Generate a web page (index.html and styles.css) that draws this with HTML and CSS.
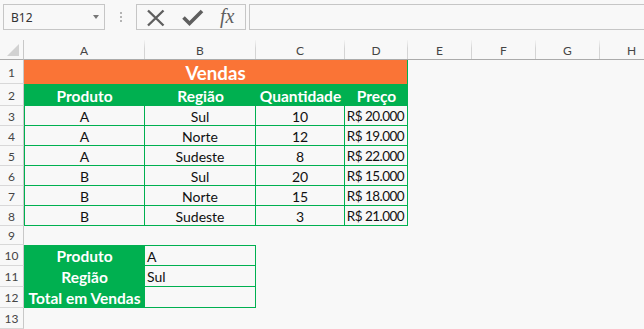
FILE: index.html
```html
<!DOCTYPE html>
<html lang="pt">
<head>
<meta charset="utf-8">
<title>Vendas</title>
<link rel="stylesheet" href="styles.css">
</head>
<body>
<div class="fbar">
  <div class="namebox"><span class="nb-text">B12</span><span class="nb-arrow"></span></div>
  <div class="grip"><i></i><i></i><i></i></div>
  <div class="fbtns">
    <svg class="ico ico-x" width="20" height="18" viewBox="0 0 20 18"><path d="M2 1.5 L17.5 16.5 M17.5 1.5 L2 16.5" stroke="#5f5f5f" stroke-width="2.4" fill="none"/></svg>
    <svg class="ico ico-ok" width="22" height="18" viewBox="0 0 22 18"><path d="M1.5 8.5 L7.5 14.5 L20 2" stroke="#5f5f5f" stroke-width="3.6" fill="none"/></svg>
    <span class="fx">fx</span>
  </div>
  <div class="finput"></div>
</div>

<div class="sheet">
  <div class="row hdr">
    <div class="corner"><svg width="12" height="12" viewBox="0 0 12 12"><path d="M12 0 L12 12 L0 12 Z" fill="#d2d2d2"/></svg></div>
    <div class="ch">A</div><div class="ch">B</div><div class="ch">C</div><div class="ch">D</div><div class="ch">E</div><div class="ch">F</div><div class="ch">G</div><div class="ch">H</div><div class="ch last"></div>
  </div>

  <div class="row h24">
    <div class="rh">1</div>
    <div class="cell title">Vendas</div>
  </div>

  <div class="row h22">
    <div class="rh">2</div>
    <div class="cell th">Produto</div>
    <div class="cell th">Região</div>
    <div class="cell th">Quantidade</div>
    <div class="cell th thd">Preço</div>
  </div>

  <div class="row h20">
    <div class="rh">3</div>
    <div class="cell td tda">A</div><div class="cell td">Sul</div><div class="cell td">10</div><div class="cell td money">R$ 20.000</div>
  </div>
  <div class="row h20">
    <div class="rh">4</div>
    <div class="cell td tda">A</div><div class="cell td">Norte</div><div class="cell td">12</div><div class="cell td money">R$ 19.000</div>
  </div>
  <div class="row h20">
    <div class="rh">5</div>
    <div class="cell td tda">A</div><div class="cell td">Sudeste</div><div class="cell td">8</div><div class="cell td money">R$ 22.000</div>
  </div>
  <div class="row h20">
    <div class="rh">6</div>
    <div class="cell td tda">B</div><div class="cell td">Sul</div><div class="cell td">20</div><div class="cell td money">R$ 15.000</div>
  </div>
  <div class="row h20">
    <div class="rh">7</div>
    <div class="cell td tda">B</div><div class="cell td">Norte</div><div class="cell td">15</div><div class="cell td money">R$ 18.000</div>
  </div>
  <div class="row h20">
    <div class="rh">8</div>
    <div class="cell td tda">B</div><div class="cell td">Sudeste</div><div class="cell td">3</div><div class="cell td money">R$ 21.000</div>
  </div>

  <div class="row h19">
    <div class="rh">9</div>
  </div>

  <div class="row h21">
    <div class="rh">10</div>
    <div class="cell lab">Produto</div><div class="cell val vtop">A</div>
  </div>
  <div class="row h21">
    <div class="rh">11</div>
    <div class="cell lab">Região</div><div class="cell val">Sul</div>
  </div>
  <div class="row h21">
    <div class="rh">12</div>
    <div class="cell lab">Total em Vendas</div><div class="cell val"></div>
  </div>
  <div class="row h21">
    <div class="rh">13</div>
  </div>
</div>
</body>
</html>
```

FILE: styles.css
```css
* { box-sizing: border-box; }

html, body {
  margin: 0;
  padding: 0;
  background: #f8f8f8;
  overflow: hidden;
}

body {
  width: 644px;
  height: 329px;
  font-family: Lato, "Open Sans", sans-serif;
  color: #111;
}

/* ---------- formula bar ---------- */
.fbar {
  height: 40px;
  display: flex;
  align-items: flex-start;
  padding-top: 4px;
  padding-left: 3px;
}

.namebox {
  width: 102px;
  height: 26px;
  border: 1px solid #c6c6c6;
  display: flex;
  align-items: center;
  justify-content: space-between;
  padding: 0 5px 0 7px;
  font-family: "Noto Sans", "Open Sans", sans-serif;
  font-size: 12px;
  color: #333;
}

.nb-arrow {
  width: 0;
  height: 0;
  border-left: 3.5px solid transparent;
  border-right: 3.5px solid transparent;
  border-top: 4px solid #777;
  margin-top: -1px;
}

.grip {
  width: 31px;
  height: 26px;
  display: flex;
  flex-direction: column;
  align-items: center;
  justify-content: center;
  gap: 2px;
}
.grip i {
  display: block;
  width: 2px;
  height: 2px;
  background: #b4b4b4;
}

.fbtns {
  width: 110px;
  height: 26px;
  border: 1px solid #c6c6c6;
  display: flex;
  align-items: center;
  padding-left: 9px;
}

.ico { display: block; }
.ico-x { margin-top: 1px; }
.ico-ok { margin-left: 16px; margin-top: 1px; }

.fx {
  margin-left: 16px;
  font-family: "Liberation Serif", "DejaVu Serif", serif;
  font-style: italic;
  font-size: 20px;
  color: #5f5f5f;
  line-height: 1;
  margin-top: -2px;
}

.finput {
  flex: 1;
  height: 26px;
  margin-left: 3px;
  border: 1px solid #c6c6c6;
  border-right: none;
}

/* ---------- sheet ---------- */
.row {
  display: grid;
  grid-template-columns: 24px 121px 111px 89px 63px 64px 64px 64px 64px 1fr;
}

.hdr { height: 20px; }
.h24 { height: 24px; }
.h22 { height: 22px; }
.h20 { height: 20px; }
.h19 { height: 19px; }
.h21 { height: 21px; }

.corner {
  border-right: 1px solid #c8c8c8;
  border-bottom: 1px solid #ababab;
  display: flex;
  align-items: flex-end;
  justify-content: flex-end;
  padding: 0 4px 3px 0;
}
.corner svg { display: block; }

.ch {
  border-bottom: 1px solid #ababab;
  border-right: 1px solid transparent;
  border-image: linear-gradient(to bottom, rgba(212,212,212,0), #d4d4d4 45%, #d4d4d4) 1;
  border-top: 0;
  border-left: 0;
  font-size: 12px;
  color: #454545;
  display: flex;
  align-items: center;
  justify-content: center;
  padding-top: 1px;
  position: relative;
}
.ch::after {
  content: "";
  position: absolute;
  left: 0;
  right: -1px;
  bottom: -1px;
  height: 1px;
  background: #ababab;
}
.ch.last { border-right: 0; }

.rh {
  border-right: 1px solid #c8c8c8;
  border-bottom: 1px solid #d8d8d8;
  font-size: 12px;
  color: #454545;
  display: flex;
  align-items: center;
  justify-content: center;
  padding-top: 1px;
}

.cell {
  display: flex;
  align-items: center;
  justify-content: center;
  font-size: 14px;
  white-space: nowrap;
  overflow: hidden;
}

.title {
  grid-column: span 4;
  background: #fa7436;
  border-right: 1px solid #00b050;
  color: #fff;
  font-weight: 700;
  font-size: 18.67px;
  padding-top: 2px;
}

.th {
  background: #00b050;
  color: #fff;
  font-weight: 700;
  font-size: 15.5px;
  padding-top: 1px;
}

.td {
  border-right: 1px solid #00b050;
  border-bottom: 1px solid #00b050;
  padding-top: 1px;
}
.tda { border-left: 1px solid #00b050; }

.money {
  justify-content: flex-end;
  padding-right: 3px;
  font-size: 13.5px;
  letter-spacing: -0.55px;
}

.lab {
  background: #00b050;
  color: #fff;
  font-weight: 700;
  font-size: 15.5px;
  padding-top: 1px;
}

.val {
  justify-content: flex-start;
  padding-left: 2px;
  padding-top: 1px;
  border-right: 1px solid #00b050;
  border-bottom: 1px solid #00b050;
}
.vtop { border-top: 1px solid #00b050; }
```
